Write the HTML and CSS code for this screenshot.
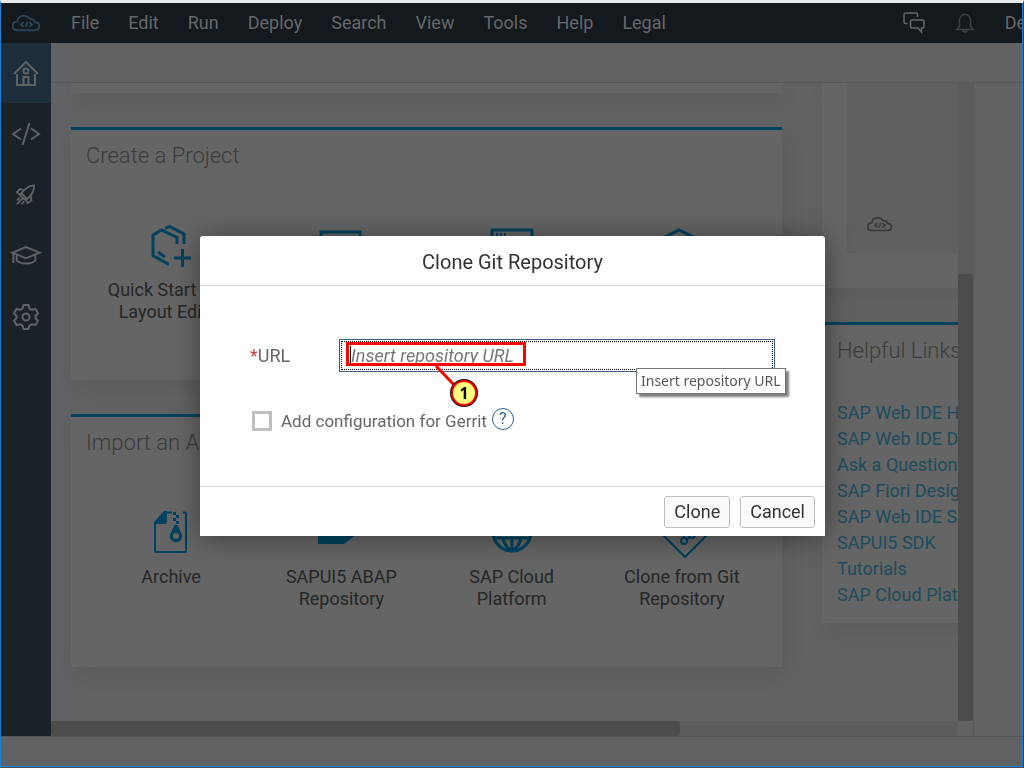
FILE: index.html
```html
<!DOCTYPE html>
<html lang="en">
<head>
<meta charset="utf-8">
<title>SAP Web IDE</title>
<link rel="stylesheet" href="styles.css">
</head>
<body>
<svg class="defs" aria-hidden="true">
  <symbol id="cloud" viewBox="0 0 30 18">
    <path d="M7 16.2h17c3 0 5.2-1.700 5.200-4.200 0-2.600-2-4.300-4.700-4.300-.6-2.500-2.900-3.700-5.300-3.200C18 2.200 15.600.8 12.900.8 9 .8 6.100 3.400 5.900 6.800c-2.900.4-5.100 2.200-5.100 4.900 0 2.700 2.400 4.500 6.200 4.500z"/>
    <path d="M12.500 7.500l-3 2.500 3 2.500M18.500 7.500l3 2.500-3 2.500M16.500 7l-2 6"/>
  </symbol>
</svg>
<div class="window">
  <header class="menubar">
    <svg class="logo" viewBox="0 0 30 18"><use href="#cloud"/></svg>
    <nav class="menus">
      <button>File</button><button>Edit</button><button>Run</button><button>Deploy</button><button>Search</button><button>View</button><button>Tools</button><button>Help</button><button>Legal</button>
    </nav>
    <div class="tools">
      <button aria-label="Feedback"><svg width="22" height="22" viewBox="0 0 22 22"><path d="M4.500 11.500H2.500Q1 11.500 1 10V2.500Q1 1 2.500 1H13Q14.500 1 14.500 2.500V5M9 8h10.500Q21 8 21 9.500V14.500Q21 16 19.500 16H18.500V20L15 16H9Q7.500 16 7.500 14.500V9.500Q7.500 8 9 8z"/></svg></button>
      <button aria-label="Notifications" class="dim"><svg width="18" height="20" viewBox="0 0 18 20"><path d="M1 16.500h16L14.500 13V8c0-3.500-2-6.500-5.500-6.500S3.500 4.500 3.500 8v5zM7 17c0 2.500 4 2.500 4 0"/></svg></button>
      <span>De</span>
    </div>
  </header>
  <div class="workspace">
    <nav class="rail">
      <button class="active" aria-label="Home"><svg width="26" height="28" viewBox="0 0 26 28"><path d="M1 15L13 3l12 12M4 15v11h18V15M10.500 26v-8h5v8"/><circle cx="13" cy="12" r="2.500"/></svg></button>
      <button aria-label="Development"><svg width="28" height="22" viewBox="0 0 28 22"><path d="M9 5.500L1 11l8 5.500M19 5.500L27 11l-8 5.500M17.500 0l-7 22"/></svg></button>
      <button aria-label="Deploy"><svg width="20" height="22" viewBox="0 0 22 24"><path d="M7.500 15.500L4.500 12.500C8 6.500 12 2 20 1.500c0 7-3.500 12-9.500 16zM7.500 15.500l3 2M8 6.500L4 5.500 1 9l4 3M16 13l1 5-4 3-2.500-4M6.500 10.500l5 5.500M1 18l3-3M1 22l6-6M6 22l3-3"/></svg></button>
      <button aria-label="Learning"><svg width="30" height="19" viewBox="0 0 32 20"><path d="M1.500 7L16 1l14.500 6L16 13zM2.500 8v10M6 10v5.500c4 4 16 4 20 0V10"/></svg></button>
      <button aria-label="Settings"><svg width="26" height="26" viewBox="0 0 26 26"><path d="M10.500 1h5l1 3.500 2.500 1.300L22.500 5 25 9.300 22.500 12v2l2.500 2.700L22.500 21l-3.500-.8-2.500 1.300-1 3.500h-5l-1-3.500L7 20.200 3.500 21 1 16.700 3.500 14v-2L1 9.300 3.500 5 7 5.800l2.500-1.300z"/><circle cx="13" cy="13" r="3.500"/></svg></button>
    </nav>
    <div class="main">
      <div class="toolbar"></div>
      <div class="panes">
        <div class="scroller">
          <div class="page">
            <div class="column">
              <section class="card tail"></section>
              <section class="card">
                <h2>Create a Project</h2>
                <div class="tiles">
                  <a href="#" class="tile"><svg width="44" height="44" viewBox="0 0 44 44"><path d="M16 5.500L20.500 3.500 35 11V21M28 21V14.500L12.500 7 4 12V32.500L20 41.500M9 29l7 5M33.500 26v18M25 35h17"/></svg><span>Quick Start with Layout Editor</span></a>
                  <a href="#" class="tile" aria-label="Project from Template"><svg width="44" height="44" viewBox="0 0 44 44"><path d="M2 9h39v32H2zM2 15h39"/></svg></a>
                  <a href="#" class="tile" aria-label="Project from Sample"><svg width="44" height="44" viewBox="0 0 44 44"><path d="M2 7h40v34H2zM2 15h40M6 11.500h2M10 11.500h2M14 11.500h2"/></svg></a>
                  <a href="#" class="tile" aria-label="Extension Project"><svg width="44" height="44" viewBox="0 0 44 44"><path d="M1 16L19 7l18 9v18l-18 9-18-9z"/></svg></a>
                </div>
              </section>
              <section class="card">
                <h2>Import an Application</h2>
                <div class="tiles">
                  <a href="#" class="tile"><svg width="44" height="44" viewBox="0 0 44 44"><path class="line" d="M6 12v28.500Q6 42 7.500 42H36Q37 42 37 40.500V4Q37 2.500 36 2.500H34M23 2.500h-7"/><path class="solid" d="M5 12L15 1h3v10q0 3-3 3H5zM24 2h3v3h-3zM27 5h3v3h-3zM24 8h3v3h-3zM27 11h3v3h-3z"/><path class="solid" fill-rule="evenodd" d="M25.500 15h3l3.500 8a6 6 0 1 1-10 0zM27 23a3 3 0 1 0 0 6 3 3 0 0 0 0-6z"/></svg><span>Archive</span></a>
                  <a href="#" class="tile"><svg width="44" height="44" viewBox="0 0 44 44"><path class="solid" d="M-1 2h38v23L25 34H-1z"/></svg><span>SAPUI5 ABAP Repository</span></a>
                  <a href="#" class="tile"><svg width="44" height="44" viewBox="0 0 44 44"><circle cx="22" cy="22" r="19"/><path d="M3 28h38M22 28v13M13 28c1 6 4 10 9 13 5-3 8-7 9-13"/></svg><span>SAP Cloud Platform</span></a>
                  <a href="#" class="tile"><svg width="44" height="44" viewBox="0 0 44 44"><path class="line" d="M25 1l23 23-23 23L2 24zM24 13v15M30 27l-4 3"/><circle class="line" cx="24" cy="31" r="3"/><circle class="line" cx="32" cy="25" r="3"/></svg><span>Clone from Git Repository</span></a>
                </div>
              </section>
            </div>
            <div class="column">
              <section class="card news"><div class="picture"><svg width="25" height="15" viewBox="0 0 30 18"><use href="#cloud"/></svg></div></section>
              <section class="card links">
                <h2>Helpful Links</h2>
                <ul>
                  <li><a href="#">SAP Web IDE Help</a></li>
                  <li><a href="#">SAP Web IDE Developer</a></li>
                  <li><a href="#">Ask a Question</a></li>
                  <li><a href="#">SAP Fiori Design</a></li>
                  <li><a href="#">SAP Web IDE SDK</a></li>
                  <li><a href="#">SAPUI5 SDK</a></li>
                  <li><a href="#">Tutorials</a></li>
                  <li><a href="#">SAP Cloud Platform</a></li>
                </ul>
              </section>
            </div>
          </div>
          <div class="hbar"><div class="thumb"></div></div>
        </div>
        <div class="vbar"><div class="thumb"></div></div>
        <aside class="side"></aside>
      </div>
    </div>
  </div>
  <footer class="status"></footer>
</div>
<div class="overlay">
  <form class="dialog" role="dialog" aria-labelledby="title">
    <h1 id="title">Clone Git Repository</h1>
    <div class="fields">
      <div class="row">
        <label for="url"><span class="star">*</span>URL</label>
        <div class="box"><input id="url" type="text" placeholder="Insert repository URL"></div>
      </div>
      <div class="check">
        <input id="gerrit" type="checkbox"><label for="gerrit">Add configuration for Gerrit</label>
        <button type="button" class="help" aria-label="Help">?</button>
      </div>
    </div>
    <div class="actions"><button type="button">Clone</button><button type="button">Cancel</button></div>
    <div class="mark"></div>
    <div class="caret"></div>
    <svg class="pointer" width="50" height="44" viewBox="0 0 50 44"><path d="M4 1L24 22"/><circle class="rim" cx="32" cy="28" r="13"/><circle class="disc" cx="32" cy="28" r="12"/><text x="32" y="34">1</text></svg>
    <div class="tip" role="tooltip">Insert repository URL</div>
  </form>
</div>
</body>
</html>
```
FILE: styles.css
```css
* { box-sizing: border-box; }
body { margin: 0; font: 18px/22px Roboto, "Liberation Sans", sans-serif; background: #50535a; }
button { font: inherit; color: inherit; background: none; border: 0; padding: 0; }
a { color: inherit; text-decoration: none; }
svg { fill: none; stroke: currentColor; stroke-width: 2; overflow: visible; }
.defs { position: absolute; width: 0; height: 0; }
.window { display: flex; flex-direction: column; height: 100vh; border-style: solid; border-width: 3px 1px 1px; border-color: #e8eaec #26394f #4b4f58 #1b80d4; overflow: hidden; }
.menubar { display: flex; align-items: center; height: 40px; flex: none; background: #13191d; color: #66686a; padding-left: 10px; border-right: 1px solid #1b80d4; overflow: hidden; }
.logo { width: 30px; height: 17px; color: #294358; }
.menus { display: flex; gap: 29px; margin-left: 30px; flex: none; }
.tools { display: flex; align-items: center; gap: 31px; margin-left: auto; margin-right: -4px; }
.tools button { display: flex; }
.tools svg { stroke-width: 1.5; }
.dim { color: #3c4145; }
.workspace { display: flex; flex: 1; min-height: 0; }
.rail { width: 50px; flex: none; background: #1b2129; color: #606264; }
.rail button { display: flex; align-items: center; justify-content: center; width: 100%; height: 61px; }
.rail button.active { background: #1c2d3b; height: 60px; }
.main { display: flex; flex-direction: column; flex: 1; min-width: 0; border-right: 1px solid #1b80d4; background: #616264; }
.toolbar { height: 40px; flex: none; border-bottom: 1px solid #57585a; }
.panes { display: flex; flex: 1; min-height: 0; }
.scroller { display: flex; flex-direction: column; flex: 1; min-width: 0; overflow: hidden; }
.page { display: flex; align-items: flex-start; gap: 40px; padding: 0 20px; flex: 1; min-height: 0; overflow: hidden; }
.column { display: flex; flex-direction: column; gap: 34px; width: 711px; flex: none; }
.card { min-height: 253px; padding: 12px 15px; background: #646564; border-top: 3px solid #00425f; box-shadow: 4px 8px 20px rgba(0,0,0,.07); }
.card.tail { min-height: 10px; padding: 0; border: 0; }
h2 { margin: 0; font-size: 22px; line-height: 28px; font-weight: 300; color: #3b3c3c; }
.tiles { display: grid; grid-template-columns: repeat(4, 1fr); padding-top: 53px; color: #004260; }
.tile { display: flex; flex-direction: column; align-items: center; text-align: center; }
.tile svg { height: 44px; margin-bottom: 12px; stroke-width: 3; }
.tile .line { stroke-width: 2; }
.tile span { width: 150px; color: #262727; }
.solid { fill: currentColor; stroke: none; }
.card.news { min-height: 205px; border: 0; padding: 0 25px 35px; color: #393a3b; }
.picture { height: 170px; background: #5f6062; padding: 132px 20px 0; }
.card.links { min-height: 301px; }
ul { list-style: none; margin: 35px 0 0; padding: 0; line-height: 26px; color: #1f4c5d; }
.hbar { height: 15px; flex: none; background: #5c5c5c; }
.hbar .thumb { width: 69.3%; height: 100%; background: #4c4c4c; border-radius: 3px; }
.vbar { display: flex; flex-direction: column; justify-content: flex-end; width: 15px; flex: none; background: #5c5b5a; border-bottom: 15px solid #616264; }
.vbar .thumb { height: 70%; background: #4c4c4c; border-radius: 3px; }
.side { width: 49px; flex: none; border-left: 1px solid #57585a; }
.status { height: 31px; flex: none; background: #616264; border-top: 1px solid #535455; border-bottom: 1px solid #1b80d4; border-right: 1px solid #1b80d4; }
.overlay { position: fixed; inset: 0; display: flex; align-items: center; justify-content: center; padding: 4px 0 0 1px; }
.dialog { position: relative; width: 625px; background: #fff; border-radius: 3px 3px 0 0; box-shadow: 0 2px 28px rgba(0,0,0,.4); color: #666; }
h1 { margin: 0; padding: 15px 0 12px; border-bottom: 1px solid #d9d9d9; text-align: center; font-size: 20px; line-height: 22px; font-weight: 400; color: #333; }
.fields { height: 200px; padding: 53px 50px 0; }
.row { display: flex; align-items: center; }
.row label { width: 89px; }
.star { color: #c14646; }
.box { flex: 1; height: 33px; border: 1px solid #3b6488; padding: 1px; }
.box input { display: block; width: 100%; height: 100%; border: 1px dotted #000; padding: 0 9px; font: 18px/22px Roboto, sans-serif; outline: 0; background: #fff; }
.box input::placeholder { color: #777; font-style: italic; opacity: 1; }
.check { display: flex; align-items: center; height: 22px; margin: 38px 0 0 2px; font-size: 17px; }
.check input { appearance: none; width: 20px; height: 20px; margin: 0 9px 0 0; border: 3px solid #bfbfbf; background: #fff; }
.help { width: 22px; height: 22px; margin: -4px 0 0 5px; border: 1px solid #346187; border-radius: 50%; color: #346187; font-size: 16px; line-height: 20px; }
.actions { display: flex; justify-content: flex-end; gap: 10px; padding: 9px 10px 8px; border-top: 1px solid #d9d9d9; color: #333; }
.actions button { height: 32px; padding: 0 9px; border: 1px solid #bfbfbf; border-radius: 3px; background: #f9fafa; }
.mark { position: absolute; left: 146px; top: 106px; width: 180px; height: 24px; border: 3px solid #f00; }
.caret { position: absolute; left: 150px; top: 110px; width: 1px; height: 17px; background: #000; }
.pointer { position: absolute; left: 232px; top: 129px; stroke: #f00; stroke-width: 2; }
.pointer .rim { stroke: #111; }
.pointer .disc { fill: #ffff80; }
.pointer path { stroke-width: 3; }
.pointer text { fill: #000; stroke: none; font: bold 16px "Noto Sans", sans-serif; text-anchor: middle; }
.tip { position: absolute; left: 436px; top: 132px; padding: 2px 4px; border: 1px solid #767676; background: #fff; box-shadow: 3px 3px 2px rgba(0,0,0,.5); color: #575757; font: 14px/20px "Noto Sans", sans-serif; white-space: nowrap; }
```
